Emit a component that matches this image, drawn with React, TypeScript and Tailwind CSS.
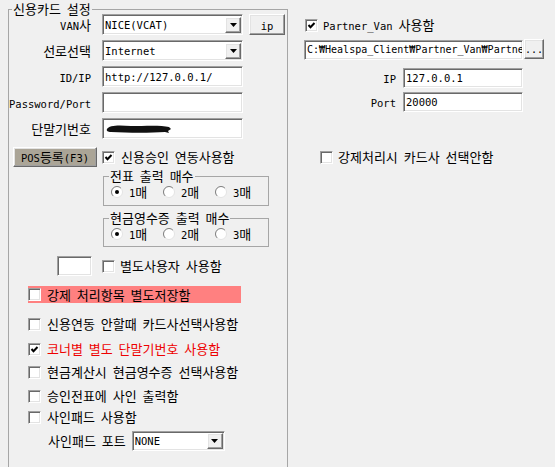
import type { ReactNode } from 'react'

const sunken =
  'border border-t-[#a0a0a0] border-l-[#a0a0a0] border-r-white border-b-white shadow-[inset_1px_1px_0_#696969,inset_-1px_-1px_0_#e3e3e3]'
const raised =
  'border border-t-white border-l-white border-r-[#696969] border-b-[#696969] shadow-[inset_-1px_-1px_0_#a0a0a0,inset_1px_1px_0_#e3e3e3]'

// latin runs are drawn narrow and monospaced, like the old dialog font
const L = ({ children, small = false }: { children: ReactNode; small?: boolean }): JSX.Element => (
  <span
    className={`font-['DejaVu_Sans_Mono',monospace] leading-[12px] [word-spacing:0px] ${
      small ? 'text-[10px]' : 'text-[10.5px]'
    }`}
  >
    {children}
  </span>
)

const Check = ({ checked = false }: { checked?: boolean }): JSX.Element => (
  <div className={`w-[13px] h-[13px] shrink-0 bg-white flex items-center justify-center ${sunken}`}>
    {checked && (
      <svg width="9" height="9" viewBox="0 0 9 9">
        <path d="M1.5 4 L3.5 6.2 L7.5 2" fill="none" stroke="#000" strokeWidth="2" />
      </svg>
    )}
  </div>
)

const Radio = ({ checked = false }: { checked?: boolean }): JSX.Element => (
  <svg width="12" height="12" viewBox="0 0 12 12" className="shrink-0">
    <circle cx="6" cy="6" r="5.5" fill="#fff" stroke="#e3e3e3" />
    <path d="M2.1 9.9 A5.5 5.5 0 0 1 9.9 2.1" fill="none" stroke="#808080" />
    {checked && <circle cx="6" cy="6" r="2" fill="#000" />}
  </svg>
)

const TextBox = ({ value, className }: { value?: ReactNode; className: string }): JSX.Element => (
  <div className={`bg-white flex items-center pl-[2px] overflow-hidden whitespace-nowrap ${sunken} ${className}`}>
    {value}
  </div>
)

const Combo = ({ value, className }: { value: string; className: string }): JSX.Element => (
  <div className={`bg-white flex items-center justify-between pl-[2px] pr-[1px] ${sunken} ${className}`}>
    <L>{value}</L>
    <div className={`w-[16px] h-[16px] bg-[#f0f0f0] flex items-center justify-center ${raised}`}>
      <svg width="7" height="4" viewBox="0 0 7 4">
        <path d="M0 0 H7 L3.5 4 Z" fill="#000" />
      </svg>
    </div>
  </div>
)

const FieldRow = ({ label, children }: { label: ReactNode; children: ReactNode }): JSX.Element => (
  <div className="flex items-center h-[21px]">
    <div className="w-[82px] text-right leading-[14px]">{label}</div>
    <div className="ml-[11px] flex items-center">{children}</div>
  </div>
)

const CopyGroup = ({ title, className }: { title: string; className: string }): JSX.Element => (
  <fieldset className={`ml-[94px] w-[166px] border border-[#a6a6a6] ${className}`}>
    <legend className="ml-[5px] px-[1px] leading-[16px]">{title}</legend>
    <div className="flex items-center h-[16px] pl-[7px]">
      {['1', '2', '3'].map((n, i) => (
        <div key={n} className="w-[52px] flex items-center gap-[6px]">
          <Radio checked={i === 0} />
          <span className="leading-[14px]">
            <L>{n}</L>매
          </span>
        </div>
      ))}
    </div>
  </fieldset>
)

const CheckRow = ({
  label,
  checked,
  className,
}: {
  label: string
  checked?: boolean
  className: string
}): JSX.Element => (
  <div className={`ml-[19px] h-[16px] flex items-center ${className}`}>
    <Check checked={checked} />
    <span className="ml-[6px]">{label}</span>
  </div>
)

export default function App(): JSX.Element {
  return (
    <div className="w-[555px] h-[467px] overflow-hidden bg-[#f0f0f0] flex items-start text-[13px] leading-[16px] [word-spacing:3px] text-black font-['Noto_Sans_CJK_KR','Liberation_Sans',sans-serif]">
      <fieldset className="ml-[8px] mt-[1px] w-[280px] h-[490px] shrink-0 border border-[#a6a6a6]">
        <legend className="ml-[3px] px-[1px] leading-[16px]">신용카드 설정</legend>
        <div className="-mt-[3px] flex flex-col">
          <div className="flex flex-col gap-[5px]">
            <FieldRow
              label={
                <>
                  <L>VAN</L>사
                </>
              }
            >
              <Combo value="NICE(VCAT)" className="w-[141px] h-[21px]" />
              <button type="button" className={`ml-[6px] w-[36px] h-[21px] bg-[#f0f0f0] ${raised}`}>
                <L>ip</L>
              </button>
            </FieldRow>
            <FieldRow label="선로선택">
              <Combo value="Internet" className="w-[141px] h-[21px]" />
            </FieldRow>
            <FieldRow label={<L>ID/IP</L>}>
              <TextBox value={<L>http://127.0.0.1/</L>} className="w-[141px] h-[21px]" />
            </FieldRow>
            <FieldRow label={<L>Password/Port</L>}>
              <TextBox className="w-[141px] h-[21px]" />
            </FieldRow>
            <FieldRow label="단말기번호">
              <TextBox
                className="w-[141px] h-[21px]"
                value={
                  <svg width="68" height="12" viewBox="0 0 68 12">
                    <path
                      d="M2 6 C4 2 14 2 26 3 C40 3 56 2 64 4 L66 6 L63 8 L64 10 L60 9 C46 10 24 10 6 9 C3 9 1 8 2 6 Z"
                      fill="#111"
                    />
                  </svg>
                }
              />
            </FieldRow>
          </div>

          <div className="mt-[8px] flex items-center h-[20px]">
            <button type="button" className={`ml-[4px] w-[84px] h-[20px] bg-[#aba597] ${raised}`}>
              <L>POS</L>등록<L>(F3)</L>
            </button>
            <div className="ml-[5px]">
              <Check checked />
            </div>
            <span className="ml-[6px]">신용승인 연동사용함</span>
          </div>

          <CopyGroup title="전표 출력 매수" className="mt-[1px] pb-[5px]" />
          <CopyGroup title="현금영수증 출력 매수" className="mt-[4px] pb-[4px]" />

          <div className="mt-[9px] flex items-center h-[20px]">
            <TextBox className="ml-[48px] w-[35px] h-[20px]" />
            <div className="ml-[10px]">
              <Check />
            </div>
            <span className="ml-[5px]">별도사용자 사용함</span>
          </div>

          <div className="mt-[10px] ml-[19px] w-[213px] h-[17px] bg-[#ff8080] flex items-center">
            <Check />
            <span className="ml-[6px]">강제 처리항목 별도저장함</span>
          </div>

          <CheckRow className="mt-[13px]" label="신용연동 안할때 카드사선택사용함" />
          <div className="mt-[9px] ml-[19px] h-[16px] flex items-center">
            <Check checked />
            <span className="ml-[6px] text-[#ee0000]">코너별 별도 단말기번호 사용함</span>
          </div>
          <CheckRow className="mt-[7px]" label="현금계산시 현금영수증 선택사용함" />
          <CheckRow className="mt-[8px]" label="승인전표에 사인 출력함" />
          <CheckRow className="mt-[5px]" label="사인패드 사용함" />

          <div className="mt-[6px] flex items-center h-[20px]">
            <span className="ml-[39px]">사인패드 포트</span>
            <Combo value="NONE" className="ml-[6px] w-[93px] h-[20px]" />
          </div>
        </div>
      </fieldset>

      <div className="ml-[16px] flex flex-col">
        <div className="mt-[17px] ml-[1px] h-[16px] flex items-center">
          <Check checked />
          <span className="ml-[5px]">
            <L>Partner_Van</L> 사용함
          </span>
        </div>
        <div className="mt-[6px] flex items-start">
          <TextBox
            value={<L small>C:₩Healspa_Client₩Partner_Van₩Partne</L>}
            className="mt-[1px] w-[219px] h-[20px]"
          />
          <button type="button" className={`ml-[1px] w-[20px] h-[20px] bg-[#f0f0f0] leading-[12px] ${raised}`}>
            <L small>...</L>
          </button>
        </div>
        <div className="mt-[8px] flex items-center h-[20px]">
          <div className="w-[92px] text-right">
            <L>IP</L>
          </div>
          <TextBox value={<L>127.0.0.1</L>} className="ml-[7px] w-[120px] h-[20px]" />
        </div>
        <div className="mt-[4px] flex items-center h-[20px]">
          <div className="w-[92px] text-right">
            <L>Port</L>
          </div>
          <TextBox value={<L>20000</L>} className="ml-[7px] w-[120px] h-[20px]" />
        </div>
        <div className="mt-[37px] ml-[16px] h-[16px] flex items-center">
          <Check />
          <span className="ml-[5px]">강제처리시 카드사 선택안함</span>
        </div>
      </div>
    </div>
  )
}
